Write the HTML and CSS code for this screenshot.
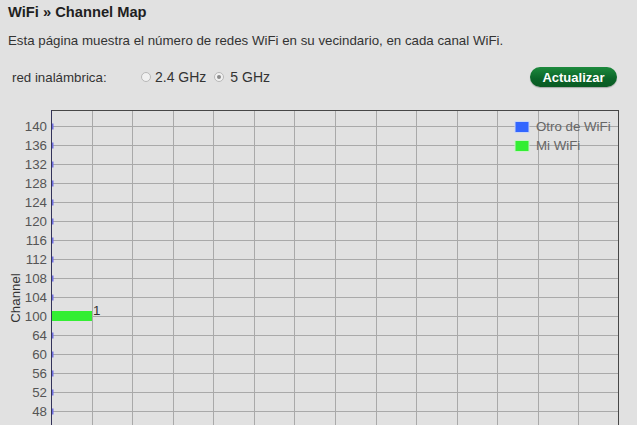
FILE: index.html
```html
<!DOCTYPE html>
<html lang="es">
<head>
  <meta charset="UTF-8" />
  <title>WiFi Channel Map</title>
  <link rel="stylesheet" href="styles.css">
</head>
<body>

  <div class="page">
    <h1>WiFi » Channel Map</h1>
    <p class="desc">Esta página muestra el número de redes WiFi en su vecindario, en cada canal WiFi.</p>

    <div class="band-row">
      <span class="band-label">red inalámbrica:</span>
      <label class="radio"><span class="dot"></span>2.4 GHz</label>
      <label class="radio checked"><span class="dot"></span>5 GHz</label>
      <button class="btn-refresh">Actualizar</button>
    </div>
  </div>

  <svg class="chart" id="chart" width="637" height="325" viewBox="0 0 637 325"></svg>

  <script>
    const svg = document.getElementById("chart");
    const NS = "http://www.w3.org/2000/svg";
    const channels = [140, 136, 132, 128, 124, 120, 116, 112, 108, 104, 100, 64, 60, 56, 52, 48, 44];
    const plotLeft = 51.3, colW = 40.53, plotTop = 10, firstRow = 26, rowH = 19;

    function el(tag, attrs, text) {
      const e = document.createElementNS(NS, tag);
      for (const k in attrs) e.setAttribute(k, attrs[k]);
      if (text !== undefined) e.textContent = text;
      svg.appendChild(e);
      return e;
    }

    // horizontal grid + labels
    channels.forEach((ch, i) => {
      const y = firstRow + i * rowH + 0.5;
      el("line", { x1: 52, x2: 618, y1: y, y2: y, class: "grid" });
      el("line", { x1: 52.5, x2: 52.5, y1: y - 3, y2: y + 3, class: "tick" });
      el("text", { x: 47, y: y + 4.5, class: "ylabel" }, ch);
    });

    // vertical grid
    for (let k = 1; k < 14; k++) {
      const x = Math.round(plotLeft + k * colW) + 0.5;
      el("line", { x1: x, x2: x, y1: plotTop, y2: 325, class: "grid" });
    }

    el("line", { x1: 51, x2: 619, y1: plotTop + 0.5, y2: plotTop + 0.5, class: "frame" });
    el("line", { x1: 618.5, x2: 618.5, y1: plotTop, y2: 325, class: "frame" });
    el("line", { x1: 51.5, x2: 51.5, y1: plotTop, y2: 325, class: "axis" });

    // my wifi on channel 100
    el("rect", { x: 52, y: 211, width: 40, height: 10, class: "bar-mine" });
    el("text", { x: 93, y: 215, class: "count" }, "1");

    el("text", { x: 20, y: 198, class: "axis-title", transform: "rotate(-90 20 198)" }, "Channel");

    // legend
    el("rect", { x: 515, y: 21.5, width: 14, height: 11, class: "leg-other" });
    el("text", { x: 536, y: 31, class: "leg-text" }, "Otro de WiFi");
    el("rect", { x: 515, y: 40.5, width: 14, height: 11, class: "leg-mine" });
    el("text", { x: 536, y: 50, class: "leg-text" }, "Mi WiFi");
  </script>

</body>
</html>
```

FILE: styles.css
```css
body {
  margin: 0;
  background: #e1e1e1;
  font-family: "Liberation Sans", Arial, sans-serif;
  color: #333;
  width: 637px;
  overflow: hidden;
}

.page {
  padding: 0 8px;
}

h1 {
  margin: 0;
  padding-top: 3px;
  font-size: 14.7px;
  line-height: 18px;
  font-weight: bold;
  color: #1f1f1f;
}

.desc {
  margin: 12px 0 0 0;
  font-size: 13.3px;
  line-height: 16px;
}

.band-row {
  display: flex;
  align-items: center;
  height: 20px;
  margin-top: 18px;
  font-size: 13.3px;
}

.band-label {
  width: 133px;
  padding-left: 4px;
  box-sizing: border-box;
}

.radio {
  display: flex;
  align-items: center;
  margin-right: 8px;
  font-size: 14px;
}

.radio .dot {
  width: 8px;
  height: 8px;
  border: 1px solid #b8b8b8;
  border-radius: 50%;
  background: #f1f1f1;
  margin-right: 4px;
  position: relative;
}

.radio.checked .dot {
  margin-right: 6px;
}

.radio.checked .dot::after {
  content: "";
  position: absolute;
  left: 2px;
  top: 2px;
  width: 4px;
  height: 4px;
  border-radius: 50%;
  background: #8a8a8a;
}

.btn-refresh {
  margin-left: auto;
  margin-right: 12px;
  width: 87px;
  height: 20px;
  border: none;
  border-radius: 10px;
  background: linear-gradient(#1d8a3d, #0b6428 60%, #0a5a23);
  color: #fff;
  font-family: "Liberation Sans", Arial, sans-serif;
  font-size: 13px;
  font-weight: bold;
  padding: 0;
  box-shadow: 0 1px 1px rgba(0, 0, 0, 0.25);
}

.chart {
  display: block;
  margin-top: 13px;
}

.grid {
  stroke: #a9a9a9;
  stroke-width: 1;
}

.frame {
  stroke: #474747;
  stroke-width: 1;
}

.axis {
  stroke: #34345a;
  stroke-width: 1;
}

.tick {
  stroke: #6f6fe0;
  stroke-width: 2;
}

.ylabel {
  font-size: 13.3px;
  fill: #555;
  text-anchor: end;
}

.count {
  font-size: 13.3px;
  fill: #333;
}

.axis-title {
  font-size: 13.3px;
  fill: #333;
  text-anchor: middle;
}

.bar-mine {
  fill: #33ee33;
}

.leg-other {
  fill: #3366ff;
  stroke: #c9d6f5;
}

.leg-mine {
  fill: #33ee33;
  stroke: #c8f0c8;
}

.leg-text {
  font-size: 13.3px;
  fill: #666;
}
```
